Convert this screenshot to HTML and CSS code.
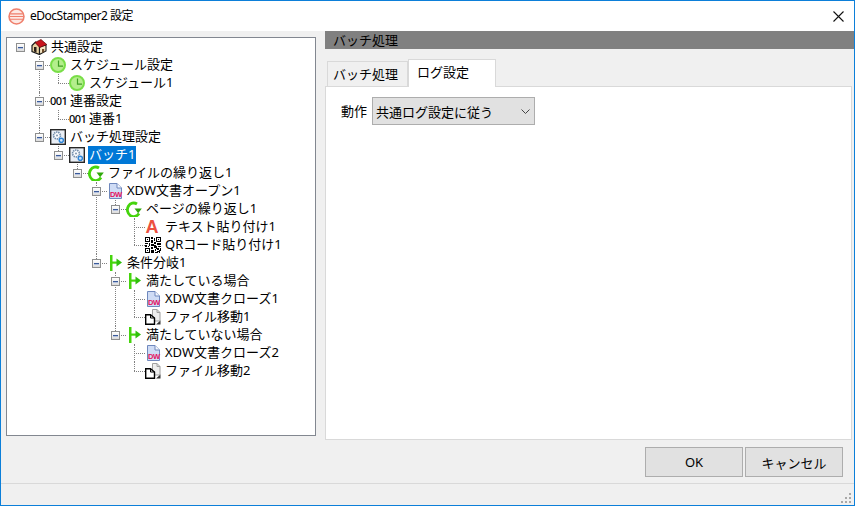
FILE: index.html
```html
<!DOCTYPE html>
<html lang="ja">
<head>
<meta charset="utf-8">
<title>eDocStamper2 設定</title>
<link rel="stylesheet" href="styles.css">
</head>
<body>
<svg class="sprite" width="0" height="0" aria-hidden="true">
  <symbol id="i-house" viewBox="0 0 16 16">
    <path d="M1 6.5 L4.5 3 L8.5 7 L8.5 15.5 L1 12.5Z" fill="#e9d3a4" stroke="#1a1a1a" stroke-width="1.2"/>
    <path d="M3 8h2.5v5.5L3 12.5z" fill="#2a2018"/>
    <path d="M8.5 8 L15 6 L15 12 L8.5 15.5Z" fill="#f6e6c4" stroke="#1a1a1a" stroke-width="1.1"/>
    <path d="M11 10h2.2v3l-2.2 1z" fill="#6b4a2a"/>
    <path d="M4 3.5 L10 0.5 L15.8 5.5 L8.8 8.5Z" fill="#c8141c" stroke="#5a0a0a" stroke-width=".7"/>
  </symbol>
  <symbol id="i-clock" viewBox="0 0 16 16">
    <circle cx="8" cy="8" r="7" fill="#b4ee8c" stroke="#79de48" stroke-width="2"/>
    <path d="M8.5 3.5V9.2H13" fill="none" stroke="#3f9e24" stroke-width="1.2"/>
  </symbol>
  <symbol id="i-gear" viewBox="0 0 16 16">
    <rect x=".7" y=".7" width="14.6" height="14.6" fill="#e9eef5" stroke="#262626" stroke-width="1.4"/>
    <circle cx="7" cy="6.5" r="3.4" fill="#fbfcfe" stroke="#6f8aa8" stroke-width="1.7" stroke-dasharray="1.3 .8"/>
    <circle cx="7" cy="6.5" r="1.1" fill="#8aa0b8"/>
    <circle cx="11.3" cy="11.3" r="2.1" fill="#cfe3f8" stroke="#2f86d8" stroke-width="1.4"/>
  </symbol>
  <symbol id="i-loop" viewBox="0 0 16 16">
    <path d="M11 3 A6.3 6.8 0 1 0 13 12.5" fill="none" stroke="#45d40c" stroke-width="2.8"/>
    <path d="M8.5 7.5 H15.8 L12.2 12.2Z" fill="#2fa80a"/>
  </symbol>
  <symbol id="i-branch" viewBox="0 0 16 16">
    <path d="M3 0h2.5v16H3z" fill="#45d40c"/>
    <path d="M5 6.5h6v2.2H5z" fill="#45d40c"/>
    <path d="M9.5 3.5 L15 7.6 L9.5 11.5Z" fill="#2fc00a"/>
  </symbol>
  <symbol id="i-xdw" viewBox="0 0 16 16">
    <path d="M2.5 .5H10L14.5 5V15.5H2.5Z" fill="#cfdcf5" stroke="#6f88bd"/>
    <path d="M10 .5V5H14.5" fill="#f4f7fd" stroke="#6f88bd"/>
  </symbol>
  <symbol id="i-move" viewBox="0 0 16 16">
    <path d="M7.5 .5H12L15 3.5V12H7.5Z" fill="#eee" stroke="#a0a0a0"/>
    <path d="M12 .5V3.5H15" fill="none" stroke="#a0a0a0"/>
    <path d="M.7 5.7H5.5L9.5 9V15.3H.7Z" fill="#fff" stroke="#000" stroke-width="1.4"/>
    <path d="M5.5 5.7V9H9.5" fill="none" stroke="#000"/>
    <path d="M11 15.5h4.5v-4z" fill="#333"/>
  </symbol>
  <symbol id="i-qr" viewBox="0 0 16 16">
    <rect width="16" height="16" fill="#fff"/>
    <path d="M0 0h5v5H0zM1 1v3h3V1zM2 2h1v1H2zM11 0h5v5h-5zM12 1v3h3V1zM13 2h1v1h-1zM0 11h5v5H0zM1 12v3h3v-3zM2 13h1v1H2z" fill="#000" fill-rule="evenodd"/>
    <path d="M6 0h2v2H6zM9 1h1v3H9zM6 3h2v3H6zM0 6h3v1H0zM4 6h1v3H4zM0 8h2v2H0zM6 7h3v2H6zM9 5h2v2H9zM12 6h4v2h-4zM9 8h2v3H9zM13 9h3v1h-3zM6 10h2v2H6zM12 11h2v2h-2zM15 11h1v3h-1zM6 13h3v3H6zM10 12h1v2h-1zM10 15h3v1h-3zM12 14h2v1h-2zM3 9h1v1H3zM11 9h1v3h-1zM14 13h1v3h-1z" fill="#000"/>
  </symbol>
</svg>

<div class="window">
  <header class="titlebar">
    <svg class="logo" width="17" height="17" viewBox="0 0 16 16" aria-hidden="true">
      <circle cx="8" cy="8" r="7" fill="#fde9e4" stroke="#ef7f6c" stroke-width="1.5"/>
      <path d="M2 5.5h12M1.5 8h13M2 10.5h12" stroke="#ef7f6c" stroke-width="1"/>
    </svg>
    <span class="title">eDocStamper2 設定</span>
    <svg class="close" width="11" height="11" viewBox="0 0 11 11" aria-hidden="true">
      <path d="M.5.5l10 10M10.5.5l-10 10" stroke="#111" stroke-width="1.1"/>
    </svg>
  </header>

  <main class="main">
    <nav class="treebox">
      <ul class="tree root">
        <li>
          <div class="row"><i class="tg"></i><svg class="ic"><use href="#i-house"/></svg><span class="lbl">共通設定</span></div>
          <ul class="tree">
            <li>
              <div class="row"><i class="tg"></i><svg class="ic"><use href="#i-clock"/></svg><span class="lbl">スケジュール設定</span></div>
              <ul class="tree">
                <li><div class="row"><i class="tg none"></i><svg class="ic"><use href="#i-clock"/></svg><span class="lbl">スケジュール1</span></div></li>
              </ul>
            </li>
            <li>
              <div class="row"><i class="tg"></i><span class="ic num">001</span><span class="lbl">連番設定</span></div>
              <ul class="tree">
                <li><div class="row"><i class="tg none"></i><span class="ic num">001</span><span class="lbl">連番1</span></div></li>
              </ul>
            </li>
            <li>
              <div class="row"><i class="tg"></i><svg class="ic"><use href="#i-gear"/></svg><span class="lbl">バッチ処理設定</span></div>
              <ul class="tree">
                <li>
                  <div class="row"><i class="tg"></i><svg class="ic"><use href="#i-gear"/></svg><span class="lbl sel">バッチ1</span></div>
                  <ul class="tree">
                    <li>
                      <div class="row"><i class="tg"></i><svg class="ic"><use href="#i-loop"/></svg><span class="lbl">ファイルの繰り返し1</span></div>
                      <ul class="tree">
                        <li>
                          <div class="row"><i class="tg"></i><span class="ic doc"><svg class="ic"><use href="#i-xdw"/></svg><b class="dw">DW</b></span><span class="lbl">XDW文書オープン1</span></div>
                          <ul class="tree">
                            <li>
                              <div class="row"><i class="tg"></i><svg class="ic"><use href="#i-loop"/></svg><span class="lbl">ページの繰り返し1</span></div>
                              <ul class="tree">
                                <li><div class="row"><i class="tg none"></i><span class="ic letter">A</span><span class="lbl">テキスト貼り付け1</span></div></li>
                                <li><div class="row"><i class="tg none"></i><svg class="ic"><use href="#i-qr"/></svg><span class="lbl">QRコード貼り付け1</span></div></li>
                              </ul>
                            </li>
                          </ul>
                        </li>
                        <li>
                          <div class="row"><i class="tg"></i><svg class="ic"><use href="#i-branch"/></svg><span class="lbl">条件分岐1</span></div>
                          <ul class="tree">
                            <li>
                              <div class="row"><i class="tg"></i><svg class="ic"><use href="#i-branch"/></svg><span class="lbl">満たしている場合</span></div>
                              <ul class="tree">
                                <li><div class="row"><i class="tg none"></i><span class="ic doc"><svg class="ic"><use href="#i-xdw"/></svg><b class="dw">DW</b></span><span class="lbl">XDW文書クローズ1</span></div></li>
                                <li><div class="row"><i class="tg none"></i><svg class="ic"><use href="#i-move"/></svg><span class="lbl">ファイル移動1</span></div></li>
                              </ul>
                            </li>
                            <li>
                              <div class="row"><i class="tg"></i><svg class="ic"><use href="#i-branch"/></svg><span class="lbl">満たしていない場合</span></div>
                              <ul class="tree">
                                <li><div class="row"><i class="tg none"></i><span class="ic doc"><svg class="ic"><use href="#i-xdw"/></svg><b class="dw">DW</b></span><span class="lbl">XDW文書クローズ2</span></div></li>
                                <li><div class="row"><i class="tg none"></i><svg class="ic"><use href="#i-move"/></svg><span class="lbl">ファイル移動2</span></div></li>
                              </ul>
                            </li>
                          </ul>
                        </li>
                      </ul>
                    </li>
                  </ul>
                </li>
              </ul>
            </li>
          </ul>
        </li>
      </ul>
    </nav>

    <section class="detail">
      <h2 class="heading">バッチ処理</h2>
      <div class="tabs">
        <div class="tab">バッチ処理</div>
        <div class="tab active">ログ設定</div>
      </div>
      <div class="panel">
        <div class="field">
          <span class="field-label">動作</span>
          <div class="combo">
            <span>共通ログ設定に従う</span>
            <svg width="9" height="5" viewBox="0 0 9 5" aria-hidden="true"><path d="M.5.5l4 4 4-4" fill="none" stroke="#444"/></svg>
          </div>
        </div>
      </div>
    </section>
  </main>

  <footer class="actions">
    <button class="btn" type="button">OK</button>
    <button class="btn" type="button">キャンセル</button>
  </footer>

  <div class="statusbar">
    <svg width="11" height="11" viewBox="0 0 11 11" aria-hidden="true">
      <path d="M8 0h2v2H8zM4 4h2v2H4zM8 4h2v2H8zM0 8h2v2H0zM4 8h2v2H4zM8 8h2v2H8z" fill="#a8a8a8"/>
    </svg>
  </div>
</div>
</body>
</html>
```
FILE: styles.css
```css
* { box-sizing: border-box; }
html, body { margin: 0; padding: 0; }
body {
  width: 855px;
  height: 506px;
  overflow: hidden;
  font-family: "Noto Sans", "Noto Sans CJK JP", sans-serif;
  font-size: 13px;
  color: #000;
}
.sprite { position: absolute; }
.window {
  width: 855px;
  height: 506px;
  border: 1px solid #0c7fd9;
  background: #f0f0f0;
  display: flex;
  flex-direction: column;
}
.titlebar {
  height: 30px;
  flex: none;
  background: #fff;
  display: flex;
  align-items: center;
  padding: 0 10px 0 7px;
}
.logo { flex: none; }
.title {
  margin-left: 5px;
  font-size: 12px;
  line-height: 16px;
  letter-spacing: -.5px;
  flex: 1;
}
.close { flex: none; }
.main { flex: 1; display: flex; min-height: 0; }
.treebox {
  width: 310px;
  margin: 6px 0 4px 5px;
  background: #fff;
  border: 1px solid #828790;
  overflow: hidden;
}
.tree { list-style: none; margin: 0; padding: 0 0 0 19px; }
.tree.root { padding-left: 0; }
.tree li { position: relative; }
.tree li::before {
  content: "";
  position: absolute;
  left: 13px;
  top: 0;
  bottom: 0;
  border-left: 1px dotted #808080;
}
.tree li:last-child::before { bottom: auto; height: 9px; }
.tree li::after {
  content: "";
  position: absolute;
  left: 13px;
  top: 9px;
  width: 11px;
  border-top: 1px dotted #808080;
}
.root > li::before, .root > li::after { display: none; }
.row {
  position: relative;
  z-index: 1;
  height: 18px;
  display: flex;
  align-items: center;
  padding-left: 9px;
}
.tg {
  flex: none;
  position: relative;
  width: 9px;
  height: 9px;
  margin-right: 6px;
  margin-top: 1px;
  border: 1px solid #8e8f8f;
  background: linear-gradient(#fff, #dcdcdc);
}
.tg::before {
  content: "";
  position: absolute;
  left: 1px;
  top: 3px;
  width: 5px;
  height: 1px;
  background: #3a5a9a;
  box-shadow: 0 1px #b4c2de;
}
.tg.none { border: 0; background: none; }
.tg.none::before { display: none; }
.ic { flex: none; width: 16px; height: 16px; display: block; }
.doc { position: relative; }
.dw {
  position: absolute;
  left: 3px;
  bottom: 0;
  font-family: "Liberation Sans", sans-serif;
  font-size: 7.5px;
  line-height: 8px;
  font-weight: 700;
  letter-spacing: -.3px;
  color: #e5105f;
}
.num {
  font-size: 11px;
  line-height: 16px;
  font-weight: 500;
  white-space: nowrap;
  letter-spacing: -.6px;
  text-align: center;
}
.letter {
  font-family: "Liberation Sans", sans-serif;
  font-weight: 700;
  font-size: 18px;
  line-height: 16px;
  color: #ec5040;
  text-align: center;
  padding-right: 2px;
}
.lbl {
  margin-left: 4px;
  height: 18px;
  line-height: 16px;
  white-space: nowrap;
}
.lbl.sel {
  margin-left: 3px;
  padding: 0 1px;
  background: #0078d7;
  color: #fff;
}
.detail {
  flex: 1;
  margin-left: 9px;
  display: flex;
  flex-direction: column;
  min-width: 0;
}
.heading {
  margin: 0;
  height: 18px;
  flex: none;
  background: #808080;
  font-size: 13px;
  font-weight: 400;
  line-height: 18px;
  padding-left: 8px;
}
.tabs {
  flex: none;
  display: flex;
  align-items: flex-end;
  padding: 10px 0 0 2px;
  margin-right: 3px;
  height: 38px;
  position: relative;
  z-index: 1;
  margin-bottom: -1px;
}
.tab {
  height: 26px;
  width: 81px;
  border: 1px solid #d9d9d9;
  line-height: 25px;
  padding-left: 5px;
  background: #f0f0f0;
}
.tab.active {
  height: 28px;
  width: 88px;
  background: #fff;
  border-bottom: 0;
  padding-left: 8px;
}
.panel {
  flex: 1;
  margin-right: 2px;
  background: #fff;
  border: 1px solid #d9d9d9;
  padding: 10px 0 0 15px;
}
.field { display: flex; align-items: center; }
.field-label { line-height: 28px; }
.combo {
  margin-left: 5px;
  width: 163px;
  height: 28px;
  background: #e1e1e1;
  border: 1px solid #adadad;
  display: flex;
  align-items: center;
  justify-content: space-between;
  padding: 0 4px 0 3px;
}
.actions {
  flex: none;
  height: 44px;
  padding: 7px 11px 0 0;
  display: flex;
  justify-content: flex-end;
  gap: 2px;
  border-bottom: 1px solid #d9d9d9;
  align-items: flex-start;
}
.btn {
  width: 98px;
  height: 30px;
  background: #e1e1e1;
  border: 1px solid #adadad;
  font: inherit;
  color: #000;
  padding: 0;
}
.statusbar {
  flex: none;
  height: 21px;
  display: flex;
  justify-content: flex-end;
  align-items: flex-end;
  padding: 0 2px 1px 0;
}
```
